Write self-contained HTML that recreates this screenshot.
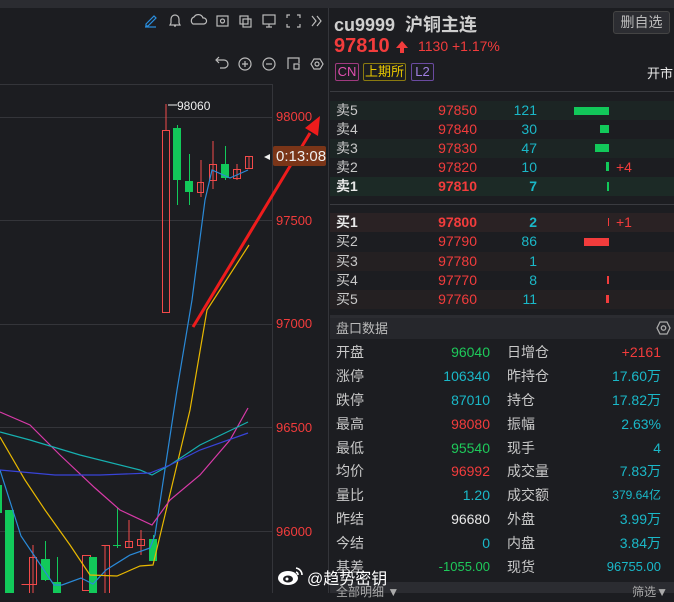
<!DOCTYPE html><html><head><meta charset="utf-8"><style>
*{margin:0;padding:0;box-sizing:border-box}
body{width:674px;height:593px;background:#1c1d21;font-family:"Liberation Sans","Noto Sans CJK SC",sans-serif;overflow:hidden;position:relative;color:#c8c8c8}
.a{position:absolute;white-space:nowrap}
.r{color:#f23c3c}.g{color:#1ec95a}.c{color:#1ab8c8}.w{color:#e8e8e8}
.row{position:absolute;left:330px;width:344px;height:19px;font-size:14px;line-height:19px}
.row span{position:absolute}
.d{position:absolute;left:330px;width:344px;height:24px;font-size:14px;line-height:24px}
.d span{position:absolute}
</style></head><body>
<div class="a" style="left:0;top:0;width:674px;height:8px;background:#2b2c31"></div>
<div class="a" style="left:328px;top:8px;width:1px;height:585px;background:#34353a"></div>
<svg class="a" style="left:0;top:0" width="330" height="593">
<g fill="none" stroke="#bbb" stroke-width="1.2">
<path d="M146 24l8-8 2 2-8 8h-2z" stroke="#2b8fe0"/><path d="M145 27h11" stroke="#2b8fe0"/>
<path d="M171 23v-4a4 4 0 018 0v4l1 2h-10z M174 26h2"/>
<path d="M193 24a4 4 0 011-7 5 5 0 019 1 3 3 0 011 6z"/>
<rect x="217" y="16" width="11" height="10"/><circle cx="222.5" cy="21" r="2"/>
<rect x="240" y="16" width="8" height="8"/><rect x="243" y="19" width="8" height="8"/>
<rect x="263" y="15" width="12" height="9"/><path d="M266 27h6M269 24v3"/>
<path d="M287 18v-3h3M297 15h3v3M287 24v3h3M300 24v3h-3"/>
<path d="M312 16l4 5-4 5M317 16l4 5-4 5"/>
<path d="M217 60h7a4 4 0 010 8h-4M219 57l-3 3 3 3"/>
<circle cx="245" cy="64" r="6"/><path d="M242 64h6M245 61v6"/>
<circle cx="269" cy="64" r="6"/><path d="M266 64h6"/>
<path d="M288 69v-11h11v5"/><rect x="294" y="64" width="5" height="5"/>
<path d="M311 64l3-5h6l3 5-3 5h-6z"/><circle cx="317" cy="64" r="2"/>
</g>
<g stroke="#34353a"><path d="M0 84.5h272M0 117.5h272M0 220.5h272M0 324.5h272M0 427.5h272M0 531.5h272M272.5 84v509"/></g>
<g font-size="13" fill="#f23c3c" font-family="Liberation Sans"><text x="276" y="121">98000</text><text x="276" y="225">97500</text><text x="276" y="328">97000</text><text x="276" y="432">96500</text><text x="276" y="536">96000</text></g>
<text x="177" y="110" font-size="12" fill="#eee">98060</text><path d="M168 105h9" stroke="#eee"/>
<g stroke="#f24a4a" fill="none"><path d="M166 104v26M162.5 130.5h7v182h-7z"/>
<path d="M201 160v37M197.5 182.5h6v10h-6zM213 141v48M209.5 164.5h7v16h-7zM237 164v16M233.5 169.5h7v9h-7zM249 156v13M245.5 156.5h7v12h-7z"/>
<path d="M33 545v48M29.5 557.5h7v27h-7zM21.5 584.5h8v9M82.5 555.5h8v35h-8zM105 545v48M101.5 545.5h8v48M129 520v28M125.5 541.5h7v6h-7zM141 530v25M137.5 539.5h7v6h-7z"/></g>
<g fill="#12c95a"><rect x="173" y="128" width="8" height="52"/><rect x="177" y="125" width="1" height="80"/><rect x="185" y="181" width="8" height="11"/><rect x="189" y="154" width="1" height="51"/><rect x="221" y="164" width="8" height="14"/><rect x="225" y="146" width="1" height="34"/>
<rect x="0" y="485" width="2" height="28"/><rect x="5" y="510" width="9" height="83"/><rect x="41" y="559" width="9" height="21"/><rect x="45" y="541" width="1" height="40"/><rect x="53" y="582" width="8" height="11"/><rect x="57" y="557" width="1" height="30"/><rect x="89" y="557" width="8" height="36"/><rect x="117" y="508" width="1" height="40"/><rect x="113" y="545" width="8" height="1"/><rect x="149" y="539" width="8" height="22"/><rect x="153" y="535" width="1" height="4"/></g>
<g fill="none" stroke-width="1.2">
<polyline stroke="#2a8ad8" points="0,470 21,536 54,585 62,585 81,578 93,584 106,570 130,555 150,548 155,535 177,390 192,300 205,200 212,170 230,178 248,170"/>
<polyline stroke="#e8b800" points="0,437 25,480 45,510 70,545 90,575 117,576 140,566 153,565 165,515 190,410 207,310 249,245"/>
<polyline stroke="#d83aa8" points="0,412 30,425 60,455 95,488 120,510 152,525 170,500 200,475 230,440 248,408"/>
<polyline stroke="#16b0b0" points="0,432 30,440 80,455 140,470 152,475 170,465 200,445 248,422"/>
<polyline stroke="#3844d8" points="0,470 55,475 100,475 150,473 170,465 200,450 248,433"/>
</g>
<path d="M193 327L310 133" stroke="#ee1c1c" stroke-width="3"/><path d="M320 116l-2 20-13-8z" fill="#ee1c1c"/>
<path d="M264 157l6-3v6z" fill="#eee"/>
<rect x="273" y="146" width="53" height="20" rx="2" fill="#7a3518"/>
<text x="276" y="161" font-size="15" fill="#eee">0:13:08</text>
</svg>
<div class="a w" style="left:334px;top:11px;font-size:18px;font-weight:bold;color:#cfcfcf">cu9999 &nbsp;沪铜主连</div>
<div class="a" style="left:613px;top:11px;width:57px;height:23px;border:1px solid #444;background:#2c2d32;border-radius:3px;font-size:14px;line-height:21px;text-align:center;color:#bbb">删自选</div>
<div class="a r" style="left:334px;top:35px;font-size:20px;font-weight:bold">97810</div>
<svg class="a" style="left:395px;top:40px" width="14" height="14"><path d="M7 1l6 7H9v5H5V8H1z" fill="#f23c3c"/></svg>
<div class="a r" style="left:418px;top:38px;font-size:14px">1130 +1.17%</div>
<div class="a" style="left:335px;top:63px;width:24px;height:18px;border:1px solid #a03a80;border-radius:2px;color:#e050b0;font-size:13px;line-height:16px;text-align:center">CN</div>
<div class="a" style="left:363px;top:63px;width:43px;height:18px;border:1px solid #8a7a10;border-radius:2px;color:#e8c800;font-size:13px;line-height:16px;text-align:center">上期所</div>
<div class="a" style="left:411px;top:63px;width:23px;height:18px;border:1px solid #6a4aa0;border-radius:2px;color:#a080e0;font-size:13px;line-height:16px;text-align:center">L2</div>
<div class="a w" style="left:647px;top:63px;font-size:13px">开市</div>
<div class="a" style="left:330px;top:91px;width:344px;height:1px;background:#3a3b40"></div>
<div class="a" style="left:330px;top:204px;width:344px;height:1px;background:#3a3b40"></div>
<div class="row" style="top:101px;background:#1c2524"><span style="left:6px">卖5</span><span class="r" style="right:197px">97850</span><span class="c" style="right:137px">121</span><span style="left:244px;top:6px;width:35px;height:8px;background:#12c95a"></span></div>
<div class="row" style="top:120px"><span style="left:6px">卖4</span><span class="r" style="right:197px">97840</span><span class="c" style="right:137px">30</span><span style="left:270px;top:5px;width:9px;height:8px;background:#12c95a"></span></div>
<div class="row" style="top:139px;background:#1c2524"><span style="left:6px">卖3</span><span class="r" style="right:197px">97830</span><span class="c" style="right:137px">47</span><span style="left:265px;top:5px;width:14px;height:8px;background:#12c95a"></span></div>
<div class="row" style="top:158px"><span style="left:6px">卖2</span><span class="r" style="right:197px">97820</span><span class="c" style="right:137px">10</span><span style="left:276px;top:4px;width:3px;height:9px;background:#12c95a"></span><span class="r" style="left:286px">+4</span></div>
<div class="row" style="top:177px;background:#1c2a26;font-weight:bold"><span class="w" style="left:6px">卖1</span><span class="r" style="right:197px">97810</span><span class="c" style="right:137px">7</span><span style="left:277px;top:5px;width:2px;height:9px;background:#12c95a"></span></div>
<div class="row" style="top:213px;background:#2a2224;font-weight:bold"><span class="w" style="left:6px">买1</span><span class="r" style="right:197px">97800</span><span class="c" style="right:137px">2</span><span style="left:278px;top:5px;width:1px;height:8px;background:#f23c3c"></span><span class="r" style="left:286px;font-weight:normal">+1</span></div>
<div class="row" style="top:232px"><span style="left:6px">买2</span><span class="r" style="right:197px">97790</span><span class="c" style="right:137px">86</span><span style="left:254px;top:6px;width:25px;height:8px;background:#f23c3c"></span></div>
<div class="row" style="top:252px;background:#242022"><span style="left:6px">买3</span><span class="r" style="right:197px">97780</span><span class="c" style="right:137px">1</span></div>
<div class="row" style="top:271px"><span style="left:6px">买4</span><span class="r" style="right:197px">97770</span><span class="c" style="right:137px">8</span><span style="left:277px;top:5px;width:2px;height:8px;background:#f23c3c"></span></div>
<div class="row" style="top:290px;background:#242022"><span style="left:6px">买5</span><span class="r" style="right:197px">97760</span><span class="c" style="right:137px">11</span><span style="left:276px;top:5px;width:3px;height:8px;background:#f23c3c"></span></div>
<div class="a" style="left:330px;top:315px;width:344px;height:3px;background:#2b2c31"></div>
<div class="a" style="left:330px;top:318px;width:344px;height:21px;background:#26272c;font-size:13px;line-height:21px;padding-left:6px;color:#bbb">盘口数据</div>
<svg class="a" style="left:655px;top:320px" width="17" height="16"><path d="M2 8l3-6h7l3 6-3 6H5z" fill="none" stroke="#aaa" stroke-width="1.3"/><circle cx="8.5" cy="8" r="2.2" fill="none" stroke="#aaa" stroke-width="1.3"/></svg>
<div class="d" style="top:340px"><span style="left:6px">开盘</span><span class="g" style="right:184px">96040</span><span style="left:177px">日增仓</span><span class="r" style="right:13px">+2161</span></div>
<div class="d" style="top:364px"><span style="left:6px">涨停</span><span class="c" style="right:184px">106340</span><span style="left:177px">昨持仓</span><span class="c" style="right:13px">17.60万</span></div>
<div class="d" style="top:388px"><span style="left:6px">跌停</span><span class="c" style="right:184px">87010</span><span style="left:177px">持仓</span><span class="c" style="right:13px">17.82万</span></div>
<div class="d" style="top:412px"><span style="left:6px">最高</span><span class="r" style="right:184px">98080</span><span style="left:177px">振幅</span><span class="c" style="right:13px">2.63%</span></div>
<div class="d" style="top:436px"><span style="left:6px">最低</span><span class="g" style="right:184px">95540</span><span style="left:177px">现手</span><span class="c" style="right:13px">4</span></div>
<div class="d" style="top:459px"><span style="left:6px">均价</span><span class="r" style="right:184px">96992</span><span style="left:177px">成交量</span><span class="c" style="right:13px">7.83万</span></div>
<div class="d" style="top:483px"><span style="left:6px">量比</span><span class="c" style="right:184px">1.20</span><span style="left:177px">成交额</span><span class="c" style="right:13px;font-size:12px">379.64亿</span></div>
<div class="d" style="top:507px"><span style="left:6px">昨结</span><span class="w" style="right:184px">96680</span><span style="left:177px">外盘</span><span class="c" style="right:13px">3.99万</span></div>
<div class="d" style="top:531px"><span style="left:6px">今结</span><span class="c" style="right:184px">0</span><span style="left:177px">内盘</span><span class="c" style="right:13px">3.84万</span></div>
<div class="d" style="top:555px"><span style="left:6px">基差</span><span class="g" style="right:184px;font-size:13px">-1055.00</span><span style="left:177px">现货</span><span class="c" style="right:13px;font-size:13px">96755.00</span></div>
<div class="a" style="left:330px;top:582px;width:344px;height:11px;background:#2b2c31;font-size:12px;line-height:20px;color:#aaa;padding-left:6px">全部明细 ▼<span style="position:absolute;right:6px">筛选▼</span></div>
<svg class="a" style="left:277px;top:565px" width="28" height="22"><ellipse cx="11" cy="13" rx="10" ry="7" fill="#fff"/><ellipse cx="11" cy="14" rx="5" ry="3.5" fill="#1c1d21"/><circle cx="10" cy="14" r="1.5" fill="#fff"/><path d="M19 3a7 7 0 016 7M19 7a3 3 0 012 3" stroke="#fff" stroke-width="1.6" fill="none"/></svg>
<div class="a" style="left:307px;top:565px;font-size:16px;color:#fff">@趋势密钥</div>
</body></html>
